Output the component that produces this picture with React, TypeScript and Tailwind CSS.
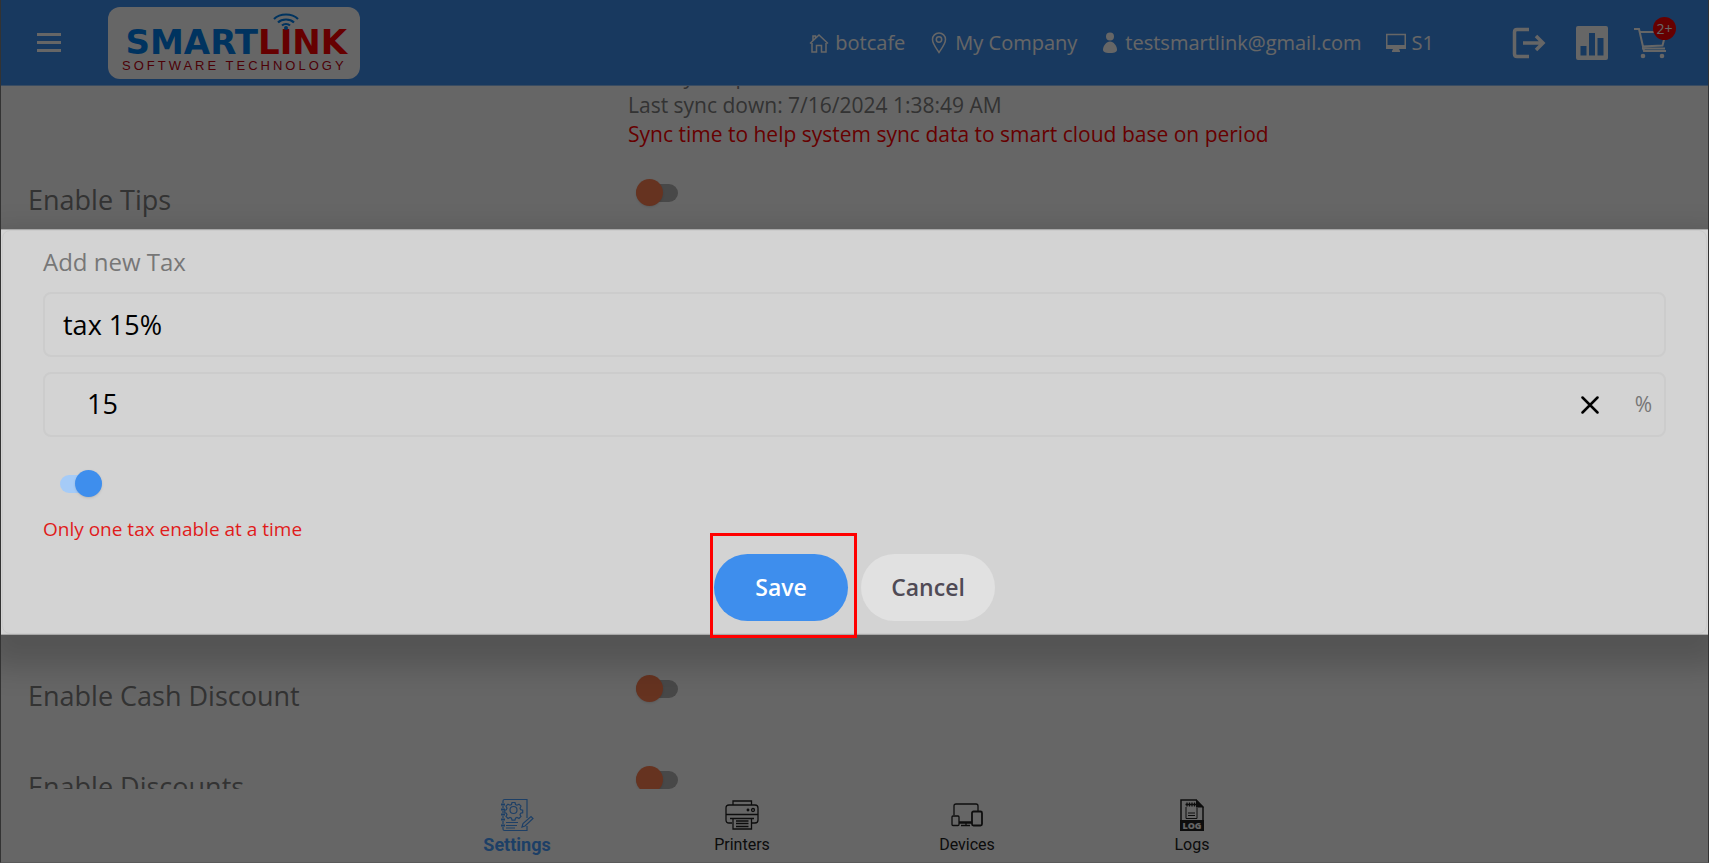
import React, { useState } from 'react';

interface SwitchProps {
  id: string;
  label: string;
  defaultChecked?: boolean;
}

const Switch: React.FC<SwitchProps> = ({ id, label, defaultChecked }) => (
  <input
    id={id}
    type="checkbox"
    role="switch"
    aria-label={label}
    defaultChecked={defaultChecked}
    className="relative block h-[18px] w-[42px] cursor-pointer appearance-none rounded-full bg-[#b4b4b4] before:absolute before:-top-[5px] before:left-0 before:h-[27px] before:w-[27px] before:rounded-full before:bg-[#ff7f50] before:shadow-sm checked:bg-[#a5cbf7] checked:before:left-[15px] checked:before:bg-[#3e8eed]"
  />
);

const Logo = () => (
  <svg width="252" height="72" viewBox="0 0 252 72" role="img" aria-label="Smartlink Software Technology">
    <rect width="252" height="72" rx="12" fill="#fff" />
    <g fontFamily="'DejaVu Sans', sans-serif" fontWeight="700" fontSize="34">
      <text x="150" y="47" textAnchor="end" fill="#0080ee">SMART</text>
      <text x="150" y="47" fill="#ff0000">LINK</text>
    </g>
    <text x="14" y="63" fontFamily="'Liberation Sans', sans-serif" fontSize="13" letterSpacing="3" fill="#c00010">
      SOFTWARE TECHNOLOGY
    </text>
    <g fill="none" stroke="#0080ee" strokeWidth="2.200">
      <path d="M166 12c6-6 18-6 24 0" />
      <path d="M170 15.500c4-4 12-4 16 0" />
      <path d="M174 18.500c2-2 6-2 8 0" />
    </g>
    <circle cx="178" cy="21" r="2" fill="#0080ee" />
  </svg>
);

const HomeIcon = () => (
  <svg width="20" height="22" viewBox="0 0 20 22" fill="none" stroke="currentColor" strokeWidth="1.5">
    <path d="M1 11.5 10 3l9 8.5M4 8.500V4h2.500v2M3 11v9h4.500v-6.500h5V20H17v-9" />
  </svg>
);

const PinIcon = () => (
  <svg width="20" height="22" viewBox="0 0 20 22" fill="none" stroke="currentColor" strokeWidth="1.5">
    <path d="M10 20.500C7 16 3.500 11.500 3.500 7.500a6.500 6.500 0 0 1 13 0c0 4-3.500 8.500-6.500 13Z" />
    <circle cx="10" cy="7.500" r="2.700" />
  </svg>
);

const PersonIcon = () => (
  <svg width="18" height="22" viewBox="0 0 18 22" fill="currentColor">
    <circle cx="9" cy="4.500" r="4" />
    <path d="M9 9.500c3.500 0 7 4.500 7 8 0 2-1.500 3.500-7 3.500s-7-1.500-7-3.500c0-3.500 3.500-8 7-8Z" />
  </svg>
);

const MonitorIcon = () => (
  <svg width="20" height="22" viewBox="0 0 20 22">
    <path d="M.75 2.500h18.500v13H.75Z" fill="none" stroke="currentColor" strokeWidth="1.500" />
    <path d="M0 13h20v4h-7l1 2v1H6v-1l1-2H0Z" fill="currentColor" />
  </svg>
);

const ExitIcon = () => (
  <svg width="34" height="32" viewBox="0 0 34 32" fill="none" stroke="currentColor" strokeWidth="3.500">
    <path d="M17 2.500H5Q2.500 2.500 2.500 5v22q0 2.500 2.500 2.500h12M11 16h20M24 9l7 7-7 7" />
  </svg>
);

const ChartIcon = () => (
  <svg width="32" height="34" viewBox="0 0 32 34" fill="currentColor" fillRule="evenodd">
    <path d="M2 0h28a2 2 0 0 1 2 2v30a2 2 0 0 1-2 2H2a2 2 0 0 1-2-2V2a2 2 0 0 1 2-2ZM4.500 20v9.500h6V20ZM13 7v22.500h6V7ZM21.500 12v17.500h6V12Z" />
  </svg>
);

const CartIcon = () => (
  <svg width="34" height="32" viewBox="0 0 34 32" fill="none" stroke="currentColor" strokeWidth="2">
    <path d="M0 2h5l5 22h22M6 5h26l-3.500 13.500-20.500 1M8 21.500h23" />
    <circle cx="9" cy="29" r="2.300" fill="currentColor" stroke="none" />
    <circle cx="28" cy="29" r="2.300" fill="currentColor" stroke="none" />
  </svg>
);

const NotebookIcon = () => (
  <svg width="34" height="34" viewBox="0 0 34 34" fill="none" stroke="currentColor" strokeWidth="1.200">
    <path d="M3 5V3q0-1.500 1.500-1.500H27V20M27 28v4.500H4.500Q3 32.500 3 31v-2M3 8v2M3 13v2M3 18v2M3 23v3" />
    <path d="M1 6.500h4M1 11.500h4M1 16.500h4M1 21.500h4M1 27.500h4" strokeWidth="2" />
    <circle cx="13.500" cy="12" r="3.500" />
    <path d="m12 4.500 3 0 .5 2 1.500.7 2-1 2 2-1 2 .7 1.500 2 .5v2.500l-2 .5-.7 1.500 1 1.800-2 2-2-1-1.500.7-.5 2h-3l-.5-2-1.500-.7-2 1-2-2 1-1.800-.7-1.500-1.500-.5v-2.500l1.500-.5.700-1.500-1-2 2-2 2 1 1.500-.7Z" />
    <path d="M6 24.500h12M6 27.500h11M6 30h9M22 29l1-3.500 8-7 2 2-8 7.500Z" />
  </svg>
);

const PrinterIcon = () => (
  <svg width="34" height="30" viewBox="0 0 34 30" fill="none" stroke="currentColor" strokeWidth="1.300">
    <path d="M8 5V1h18.500v4M1 15V8q0-3 3-3h26q3 0 3 3v12q0 3-3 3h-3M7 23H4q-3 0-3-3v-5M1 14.500h32M5 18.500h24" />
    <path d="M8 18.500V29h18.500V18.500M11 21h12.500M11 23.500h12.500M11 26.500h12.500" />
    <circle cx="28" cy="10" r="1.500" />
    <circle cx="23" cy="10" r=".8" />
  </svg>
);

const DevicesIcon = () => (
  <svg width="32" height="24" viewBox="0 0 32 24" fill="none" stroke="currentColor" strokeWidth="1.300">
    <path d="M3 12V3q0-2 2-2h20q2 0 2 2v5M8 19h13M8 20h13M15 20v2M10 22.500h9" />
    <rect x="1" y="13" width="7" height="9.500" rx="1" />
    <rect x="21" y="8.500" width="10" height="14" rx="1.500" strokeWidth="1.800" />
  </svg>
);

const LogIcon = () => (
  <svg width="24" height="32" viewBox="0 0 24 32">
    <path d="M1 22V1h15l7 7v14" fill="none" stroke="currentColor" strokeWidth="1.500" />
    <path d="M16 0v8.500h8ZM0 21h24v11H0Z" fill="currentColor" />
    <path d="M5.500 5.500h11M7 3.500v4M9.500 3.500v4M12 3.500v4M14.500 3.500v4" stroke="currentColor" strokeWidth="1.300" />
    <path d="M6 8v11.500h11V9M8 14h7M8 16.500h7" fill="none" stroke="currentColor" strokeWidth="1" />
    <text x="12" y="30" textAnchor="middle" fontFamily="'Open Sans', sans-serif" fontSize="9" fontWeight="800" fill="#fff">LOG</text>
  </svg>
);

const ACCOUNT_INFO = [
  { text: 'botcafe', icon: <HomeIcon /> },
  { text: 'My Company', icon: <PinIcon /> },
  { text: 'testsmartlink@gmail.com', icon: <PersonIcon /> },
  { text: 'S1', icon: <MonitorIcon /> },
];

const TABS = [
  { name: 'Settings', icon: <NotebookIcon />, active: true },
  { name: 'Printers', icon: <PrinterIcon /> },
  { name: 'Devices', icon: <DevicesIcon /> },
  { name: 'Logs', icon: <LogIcon /> },
];

const Header = () => (
  <header className="flex h-[86px] shrink-0 items-center justify-between border-b border-[#8fbff5] bg-[#3e8eed] pr-10 pl-9 text-white">
    <div className="flex items-center gap-[47px]">
      <button type="button" aria-label="Menu" className="flex w-6 flex-col gap-[5px]">
        <span className="h-[3px] bg-white" />
        <span className="h-[3px] bg-white" />
        <span className="h-[3px] bg-white" />
      </button>
      <Logo />
    </div>
    <div className="flex items-center">
      <ul className="mr-[78px] flex items-center gap-6 text-[20px]">
        {ACCOUNT_INFO.map((item) => (
          <li key={item.text} className="flex items-center gap-1.5">
            {item.icon}
            <span>{item.text}</span>
          </li>
        ))}
      </ul>
      <div className="flex items-center gap-[26px]">
        <button type="button" aria-label="Sign out" className="mr-1"><ExitIcon /></button>
        <button type="button" aria-label="Reports"><ChartIcon /></button>
        <button type="button" aria-label="Cart" className="relative">
          <CartIcon />
          <span className="absolute -top-[10px] -right-2 flex h-[23px] w-[23px] items-center justify-center rounded-full bg-[#ff0000] text-[14px]">
            2+
          </span>
        </button>
      </div>
    </div>
  </header>
);

const SettingRow = ({ id, label }: { id: string; label: string }) => (
  <div className="grid h-[91px] grid-cols-[5fr_9fr] items-center">
    <label htmlFor={id} className="pt-0.5 text-[27px] text-[#808080]">{label}</label>
    <div className="-mt-3.5 pl-2">
      <Switch id={id} label={label} />
    </div>
  </div>
);

const TaxDialog = () => {
  const [name, setName] = useState('tax 15%');
  const [rate, setRate] = useState('15');

  return (
    <div className="absolute inset-0 flex items-center bg-black/60 pt-0.5">
      <form
        role="dialog"
        aria-label="Add new Tax"
        onSubmit={(e) => e.preventDefault()}
        className="w-full border-y border-[#a8a8a8] bg-[#d3d3d3] shadow-[0_18px_28px_14px_rgba(0,0,0,0.18)]"
      >
        <div className="mx-px rounded-lg border border-[#cbcbcb] px-10 pt-[15px] pb-3">
          <h2 className="mb-[14px] text-[24px] leading-8 text-[#777777]">Add new Tax</h2>
          <input
            aria-label="Tax name"
            value={name}
            onChange={(e) => setName(e.target.value)}
            className="block h-[65px] w-full rounded-lg border-2 border-[#cccccc] px-[18px] text-[27px] text-black outline-none"
          />
          <div className="mt-[15px] flex h-[65px] items-center rounded-lg border-2 border-[#cccccc] pr-3 pl-[42px]">
            <input
              aria-label="Tax rate"
              value={rate}
              onChange={(e) => setRate(e.target.value)}
              className="min-w-0 flex-1 text-[27px] text-black outline-none"
            />
            <button type="button" aria-label="Clear" onClick={() => setRate('')} className="mr-9">
              <svg width="18" height="18" viewBox="0 0 18 18" stroke="#000" strokeWidth="2.500" strokeLinecap="round">
                <path d="m1.500 1.500 15 15M16.500 1.500l-15 15" />
              </svg>
            </button>
            <span className="text-[21px] text-[#777777]">%</span>
          </div>
          <div className="mt-[38px] pl-[17px]">
            <Switch id="tax-enabled" label="Enable this tax" defaultChecked />
          </div>
          <p className="mt-[22px] text-[19px] leading-7 text-[#e01b1b]">Only one tax enable at a time</p>
          <div className="mt-[11px] flex justify-center gap-[13px] text-[23px] font-semibold">
            <div className="relative">
              <button type="submit" className="h-[67px] w-[134px] rounded-full bg-[#3e8eed] text-white">Save</button>
              <span className="pointer-events-none absolute -top-[21px] -right-[9px] -bottom-[17px] -left-1 border-3 border-[#ff0000]" />
            </div>
            <button type="button" className="h-[67px] w-[134px] rounded-full bg-[#e1e1e1] text-[#4f4a55]">Cancel</button>
          </div>
        </div>
      </form>
    </div>
  );
};

const App: React.FC = () => (
  <div className="relative flex h-screen flex-col overflow-hidden border-x border-b border-x-[#333333] border-b-[#5a5a5a] bg-white font-['Open_Sans',sans-serif]">
    <Header />

    <main className="min-h-0 flex-1 overflow-hidden pl-[27px]">
      {/* scrolled part way down the settings list */}
      <div className="-mt-6">
        <div className="mb-[5px] grid grid-cols-[5fr_9fr] text-[21px] leading-[29px] text-[#808080]">
          <div className="col-start-2">
            <p>Last sync up: 7/16/2024 1:38:49 AM</p>
            <p>Last sync down: 7/16/2024 1:38:49 AM</p>
            <p className="text-[#ff0000]">Sync time to help system sync data to smart cloud base on period</p>
          </div>
        </div>
        <SettingRow id="tips" label="Enable Tips" />
        <div className="h-[405px]" />
        <SettingRow id="cash-discount" label="Enable Cash Discount" />
        <SettingRow id="discounts" label="Enable Discounts" />
      </div>
    </main>

    <nav className="flex h-[73px] shrink-0 justify-center font-[Roboto,sans-serif]">
      {TABS.map((tab) => (
        <a
          key={tab.name}
          href="#"
          className={
            tab.active
              ? 'flex w-[225px] flex-col items-center text-[18px] font-bold text-[#4a9fff]'
              : 'flex w-[225px] flex-col items-center text-[16px] text-[#222222]'
          }
        >
          <span className="flex h-12 items-center pt-1">{tab.icon}</span>
          <span className="leading-4">{tab.name}</span>
        </a>
      ))}
    </nav>

    <TaxDialog />
  </div>
);

export default App;
